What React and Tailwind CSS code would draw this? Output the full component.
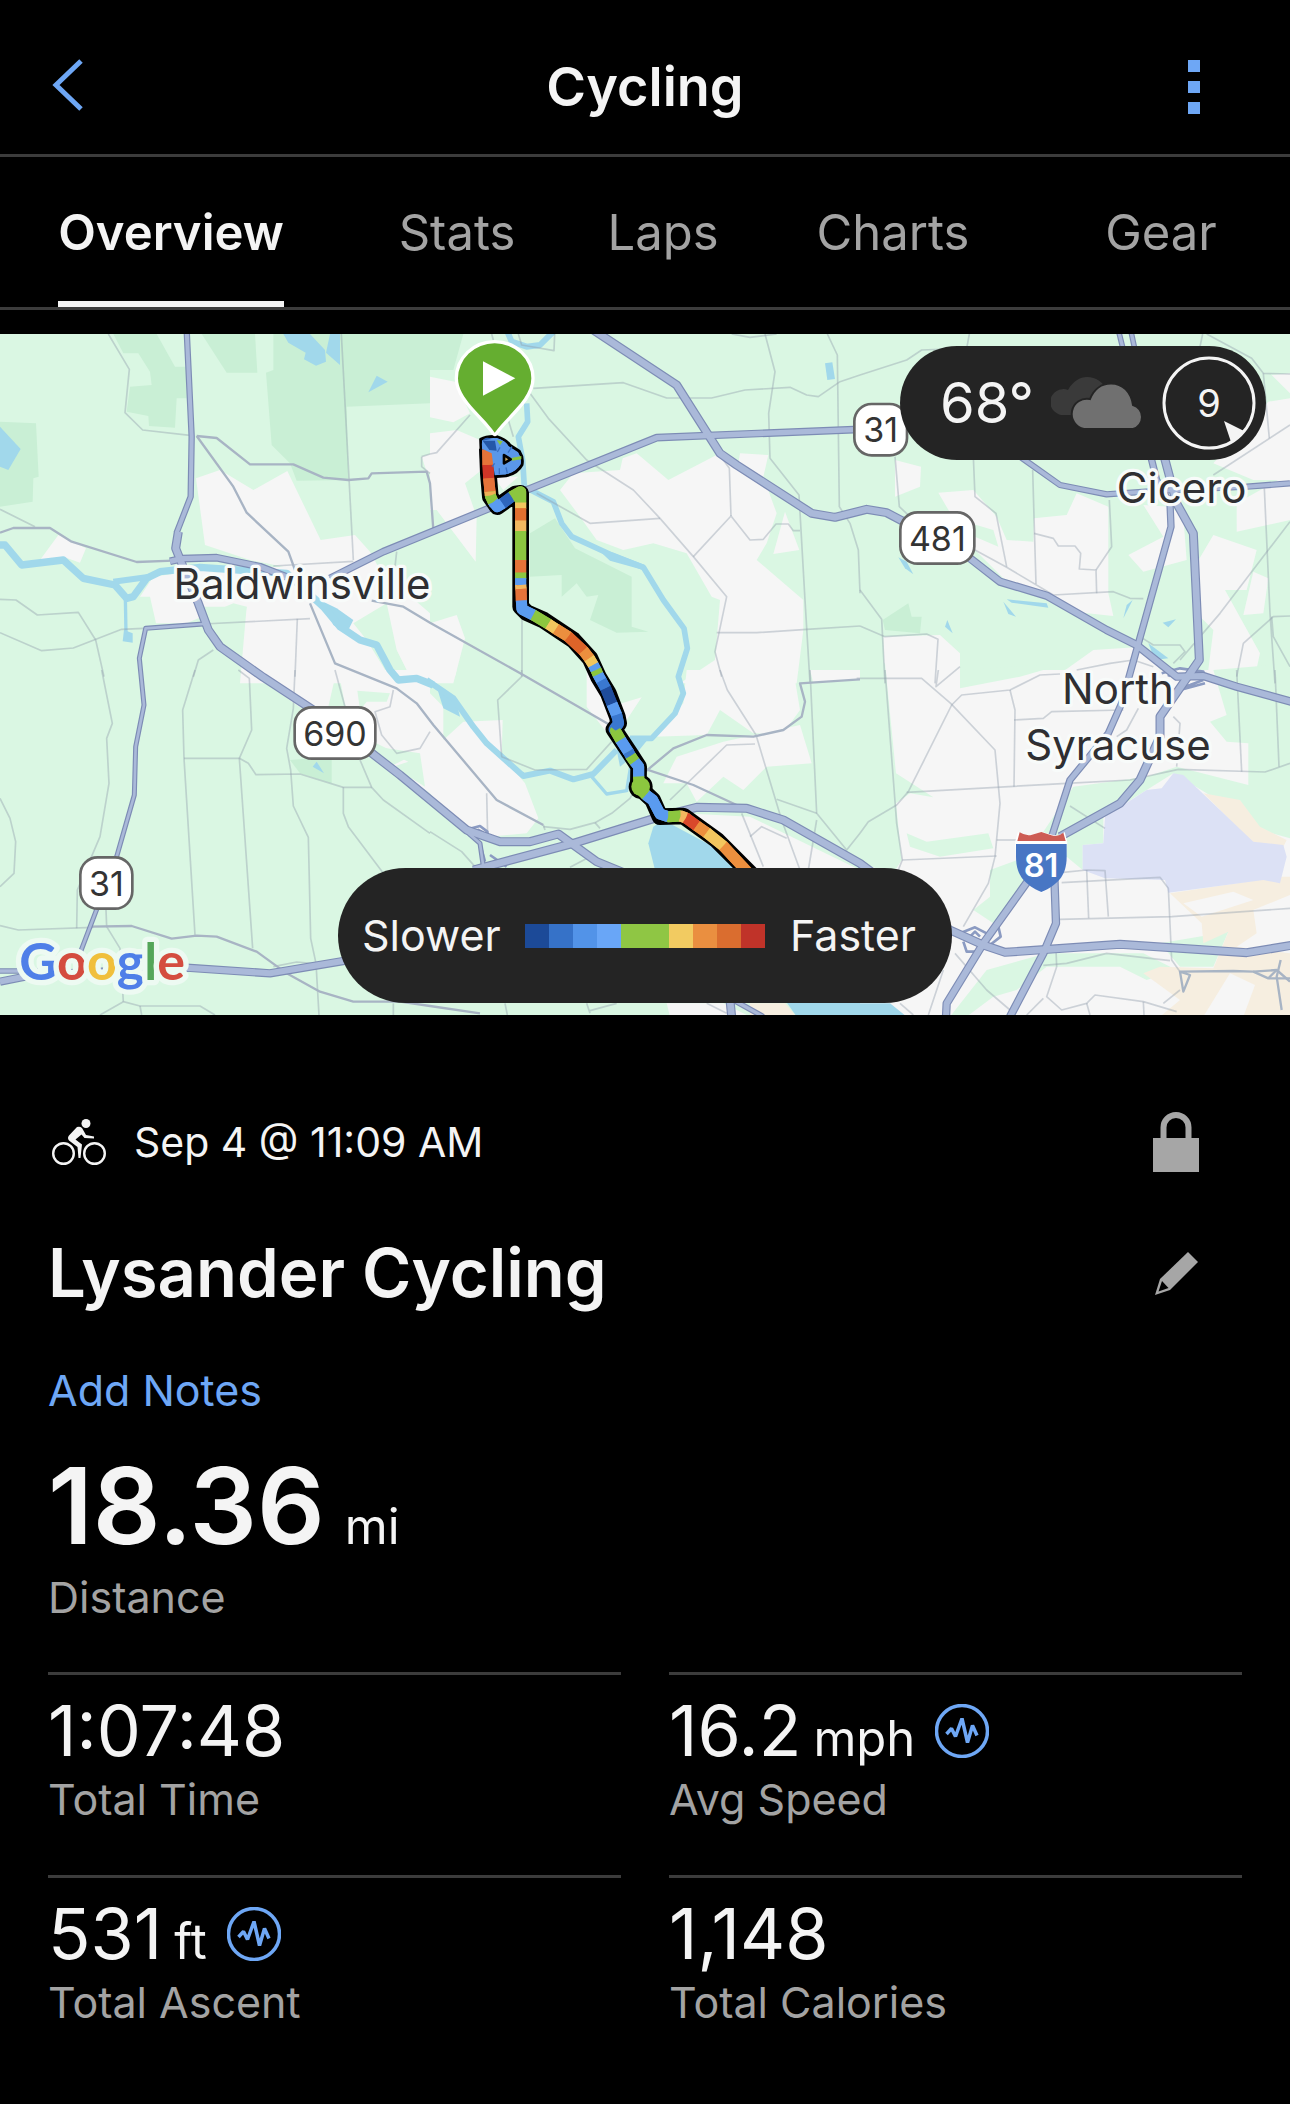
import React from "react";

/* Map geometry: each tile is 1290 units wide; lists are SVG point strings. */
const LAND = {
  green: "#daf7e3",
  wood: "#c9efd5",
  white: "#f6f6f6",
  water: "#a1d8eb",
  airport: "#dce1f5",
  beige: "#f6eee0",
};

const AREAS = [
  {
    at: "translate(0 0)",
    shapes: [
      ["wood", "340,12 470,12 525,110 560,110 560,205 530,205 525,293 447,288 445,258 380,245 390,170 455,165 450,125 415,70 370,70"],
      ["wood", "605,12 765,12 772,128 680,128"],
      ["wood", "820,12 1390,12 1360,120 1290,120 1290,220 1040,230 1045,450 890,452 870,400 815,345 798,128 820,120"],
      ["wood", "0,275 108,280 116,440 100,445 98,515 0,530"],
      ["white", "588,445 660,420 760,480 862,423 962,630 1065,615 1110,665 1140,720 1290,850 1290,1060 720,1060 740,830 700,820 560,880 468,880 450,800 420,800 460,740 600,720 850,710 750,690 615,645"],
      ["green", "1060,880 1160,820 1190,960 1240,1060 1180,1060 1100,930"],
      ["green", "600,830 740,830 720,960 680,960 610,880"],
      ["white", "175,615 258,655 240,698 190,680 120,690"],
      ["white", "1265,380 1300,370 1300,430 1280,425"],
      ["water", "850,12 930,12 975,60 978,95 948,107 912,88 917,68 865,38"],
      ["water", "990,12 1020,12 1020,105 978,68"],
      ["water", "1130,137 1163,155 1105,187"],
      ["water", "0,290 62,357 25,420 0,410"],
      ["water", "372,900 398,910 398,938 368,934"],
      ["water", "970,815 1010,835 1060,870 1040,910 1000,885"],
    ],
  },
  {
    at: "translate(1290 0)",
    shapes: [
      ["white", "0,140 75,155 120,250 70,277 0,262"],
      ["white", "0,310 80,300 150,330 180,400 105,460 140,560 137,695 20,540 0,540"],
      ["white", "190,440 265,440 220,480"],
      ["white", "390,480 430,430 570,420 578,385 620,370 715,450 870,370 925,400 930,370 1015,375 1000,440 1040,550 1010,640 980,690 1120,810 1120,900 1100,1060 750,1060 855,990 870,810 845,800 770,670 670,640 580,660 500,630 450,560"],
      ["white", "1065,545 1108,660 1030,672"],
      ["white", "0,880 80,855 105,925 70,1060 0,1060"],
      ["wood", "300,610 375,565 435,655 605,740 605,890 655,905 560,908 480,870 505,795 470,800 440,760 395,800 395,735 300,740"],
      ["water", "1185,100 1207,97 1215,147 1192,150"],
      ["water", "500,655 540,665 645,705 640,720 540,692"],
    ],
  },
  {
    at: "translate(2580 0)",
    shapes: [
      ["white", "105,390 183,410 180,470 105,500"],
      ["white", "235,488 340,480 410,560 440,630 520,635 522,565 620,555 650,490 745,530 745,790 760,858 640,845 560,790 430,745 345,660 345,620 415,650 400,600 280,565"],
      ["white", "850,525 930,530 970,560 980,690 850,725 805,675 910,620"],
      ["white", "1060,615 1190,660 1160,780 1095,780 1150,880 1200,970 1180,1060 1040,1060 1060,900 1040,880 1020,860 1010,700"],
      ["white", "1130,520 1290,430 1290,570 1130,605"],
      ["white", "1060,400 1225,215 1290,205 1290,450 1180,450"],
      ["white", "1235,135 1290,130 1290,190"],
      ["white", "1180,725 1225,745 1210,850 1150,855"],
      ["white", "70,920 240,915 300,970 300,1060 75,1060"],
      ["white", "700,960 850,950 930,1060 560,1060"],
      ["wood", "68,870 145,820 155,860 185,860 180,910 75,900"],
      ["water", "115,682 140,695 160,733 135,715"],
      ["water", "440,808 560,820 565,833 455,818"],
      ["water", "430,815 468,860 445,852"],
      ["water", "818,810 790,865 800,825"],
      ["water", "908,878 948,868 925,892"],
      ["water", "865,940 925,985 885,990"],
      ["water", "262,870 278,910 255,890"],
    ],
  },
  {
    at: "translate(0 1020)",
    shapes: [
      ["white", "740,0 1010,0 985,110 900,112"],
      ["white", "1015,0 1290,0 1290,370 1235,330 1240,295 1170,290 1250,250 1180,245 1120,215 1035,105"],
      ["green", "1072,62 1170,70 1160,95 1100,95 1080,120"],
      ["green", "1130,230 1260,250 1275,350 1180,290 1225,275"],
      ["wood", "870,270 995,260 995,340 900,310"],
      ["water", "950,275 972,310 938,290"],
    ],
  },
  {
    at: "translate(1290 1020)",
    shapes: [
      ["white", "0,0 80,0 75,20 0,20"],
      ["white", "0,70 40,110 40,210 100,155 218,150 215,255 285,340 325,445 290,490 180,500 80,470 0,370"],
      ["water", "20,50 75,80 90,140 40,115"],
      ["white", "470,0 500,0 540,110 635,82 590,150 540,200 470,110"],
      ["white", "770,0 1105,0 1095,30 1110,120 1060,190 970,190 870,120 830,195 670,200 760,100"],
      ["white", "740,260 880,215 1110,165 1145,280 1010,290 940,360 880,320 800,395 770,340 700,340"],
      ["white", "760,430 960,440 1290,600 950,620 880,500"],
      ["white", "1140,0 1290,0 1290,30 1150,40"],
      ["white", "710,1000 880,1000 960,1040 720,1040"],
      ["beige", "960,1000 1065,1000 1100,1040 960,1040"],
      ["water", "655,520 670,470 700,450 850,530 950,620 680,620"],
      ["water", "1065,990 1400,1000 1420,1040 1100,1040"],
      ["water", "560,240 600,200 660,200 620,250 570,290"],
    ],
  },
  {
    at: "translate(2580 1020)",
    shapes: [
      ["white", "0,0 1290,0 1290,1040 0,1040"],
      ["green", "0,-20 75,-20 108,310 220,382 150,370 108,400 125,570 100,610 0,580"],
      ["green", "300,0 620,-20 480,20 300,55"],
      ["green", "140,490 200,515 385,490 400,535 240,560 150,530"],
      ["green", "390,600 500,560 640,350 860,320 950,290 1165,345 1165,220 1100,215 1050,155 1100,135 1060,0 1290,-20 1290,505 1200,480 1040,370 940,310 860,360 730,440 730,520 668,525 668,600 620,560 500,640 400,760 340,720 390,680"],
      ["green", "380,900 560,850 700,850 850,850 950,900 860,930 780,890 560,890 470,960 400,980 320,1040 270,1040"],
      ["green", "900,820 1105,785 1060,890 960,890"],
      ["beige", "1030,370 1140,390 1200,470 1280,510 1270,530 1180,520"],
      ["beige", "930,670 1260,620 1290,620 1290,675 1180,720 1190,790 1130,830 1290,850 1290,1040 900,1040 960,990 850,910 900,890 1060,895 1105,785 1030,820 1025,760"],
      ["white", "970,700 1120,665 1180,690 1025,740"],
      ["white", "1110,910 1185,945 1150,1040 1030,1040"],
      ["airport", "940,310 970,315 1180,515 1270,525 1280,560 1260,640 1210,630 925,668 915,630 735,625 668,600 668,525 730,520 735,440 860,360 905,355"],
      ["water", "-20,1000 90,1000 140,1040 -20,1040"],
    ],
  },
];

const RIVERS = [
  ["translate(0 0)", 22, "-10,645 15,645 65,705 190,690 250,745 345,765 380,805 400,800 440,745 480,725 600,712 860,730 970,830 1020,890 1080,930 1130,945 1170,1020 1195,1050 1250,1045 1300,1065"],
  ["translate(0 0)", 18, "340,755 450,740"],
  ["translate(0 0)", 10, "376,800 378,910"],
  ["translate(1290 0)", 18, "230,0 245,35 290,50 330,45 370,5"],
  ["translate(1290 0)", 17, "290,220 293,275 265,320 278,390 283,470 370,515 395,580 425,620 545,675 640,712 700,810 762,895 772,955 745,1040 760,1090 735,1150 665,1225 600,1225"],
  ["translate(1290 1020)", 18, "-10,30 70,85 130,170 170,220 280,318 360,302 430,328 490,312 560,240"],
  ["translate(1290 1020)", 10, "485,320 530,372 590,362 605,270"],
];

/* Local streets */
const LOCAL = [
  ["translate(0 0)", [
    "325,12 388,118 375,248 428,300 570,316",
    "1024,12 1060,690", "820,708 1060,694", "0,538 105,590",
    "0,808 48,810 112,855 235,847 287,930 312,1040",
    "0,908 125,962 220,954 365,898 430,895", "610,882 930,866", "892,866 885,1040",
    "580,1040 595,990 640,960", "1190,665 1185,710",
  ]],
  ["translate(1290 0)", [
    "-25,380 0,372 20,368 120,255", "-25,380 -25,410 0,430", "235,270 250,320",
    "265,12 275,45 372,62 374,12", "185,12 190,30",
    "310,175 580,158 710,204 845,204 945,180 1080,172 1130,195 1165,200 1230,155 1290,135",
    "300,190 355,265 470,390 610,480 690,565 790,680 890,800 855,965 875,1040",
    "320,490 480,580 690,565", "790,680 903,558 960,630 1000,628 1038,582 1075,582 1090,602 1110,602",
    "903,558 898,415 830,320", "1005,12 1035,125 1016,250 1020,385 1107,495 1125,810 1140,1060",
    "1192,12 1222,75 1228,530 1260,580 1285,660 1290,790", "860,908 980,908 1130,898 1290,888",
    "276,850 276,1040", "905,12 960,22 1040,12",
  ]],
  ["translate(2580 0)", [
    "0,135 140,90 185,60 320,55 328,12", "105,380 118,530 150,560", "340,380 345,500 408,550 440,710",
    "518,420 522,560 528,762", "522,610 580,625 595,648 645,648 662,670 658,717 708,720 710,790",
    "708,720 755,650 748,510", "345,660 440,712 580,795 760,785 810,805 850,806",
    "0,780 65,868 75,1060", "0,888 75,920 200,912 234,928 225,1060",
    "1040,12 1175,85 1210,130 1290,132", "1020,50 1028,12", "1210,130 1228,325", "1060,435 1290,285",
    "1213,475 1230,850 1245,1060", "960,990 1080,850 1290,575", "1290,858 1240,860 1150,940 1130,1040",
    "1235,860 1240,920 1290,1010", "840,920 880,945 960,945 975,965 940,1000", "650,1020 750,1000 820,990 880,1010",
  ]],
  ["translate(0 1020)", [
    "305,0 337,160 320,205 327,340 300,500 232,660 230,775", "0,385 30,445 47,515 42,610 0,650",
    "585,0 548,120 552,265 585,795", "715,0 748,25 755,180 718,265 758,835",
    "552,265 718,265 745,280 768,314 900,312 1030,352 1115,352", "885,0 880,115 860,235 872,300 880,408 925,502 932,805 948,880 957,1035",
    "1005,0 1035,110", "1080,270 1115,352 1150,390 1290,490", "1030,352 1030,430 1045,470 1150,610",
    "0,767 55,780 280,772", "318,720 320,770 360,835 370,995", "300,1035 370,995 420,1008 600,1008 645,1035",
    "420,1008 425,1035", "820,890 890,876 960,882", "1180,1000 1180,1035", "1180,60 1170,110 1125,125 1145,195 1190,250 1260,235 1290,185",
  ]],
  ["translate(1290 1020)", [
    "275,0 275,20 203,90 215,260 315,300 470,298 545,215", "170,370 173,500", "0,485 95,545 135,590",
    "340,465 345,480", "340,470 420,478 495,458 545,430 600,385 620,350", "495,458 510,475", "480,560 420,592",
    "870,0 892,60 978,195 990,235 1055,450 1110,600", "1140,0 1160,430 1250,540 1290,490",
    "720,390 890,225 975,222", "1040,388 1160,430", "935,430 1000,590", "960,500 995,470 1070,505", "1160,450 1135,600",
    "225,1000 232,1035", "470,1000 480,1030", "480,1022 560,1000", "830,1000 890,1030",
  ]],
  ["translate(2580 1020)", [
    "-10,25 185,25 272,100 405,240 420,400 405,560 385,640 310,770",
    "300,-10 228,50 235,0", "275,105 145,365", "275,105 305,75 450,60 540,15 600,12",
    "450,60 465,120 462,350", "462,150 550,145 575,125 790,120", "75,0 110,460 127,570 95,650", "127,570 410,558",
    "140,367 620,340 810,330 955,298 1215,306 1290,280", "0,490 25,455 110,405 145,365",
    "1130,0 1145,305", "1245,0 1257,290", "630,408 735,475", "410,510 480,510",
    "610,607 680,600 735,602 745,740", "680,600 686,745", "605,638 900,622 925,655 935,870 960,905",
    "600,748 935,740 1290,715", "588,840 590,890 560,980 605,1020 680,1000 705,975 850,995 950,1025",
    "550,886 620,880 740,850 930,872", "285,850 380,960 450,1020", "250,900 205,1035", "910,1000 960,960",
    "550,985 500,1035", "680,1000 690,1035", "850,995 852,1035", "835,115 800,180 770,200", "120,1000 160,1035",
    "940,140 960,160 950,290",
  ]],
];

/* Secondary roads */
const MINOR = [
  ["translate(0 0)", [
    "0,608 40,594 150,594 215,635 410,696 520,692",
    "590,318 650,324 750,403 880,403 970,443 1045,450 1105,445 1115,430 1280,425 1290,460 1300,600",
    "590,318 700,470 740,548 865,665 885,720", "930,820 1005,1000 1190,1075 1250,1120 1300,1185 1490,1410 1630,1485",
    "1115,812 1210,830 1290,878 1570,1035 1830,1185",
  ]],
  ["translate(0 1020)", ["270,770 395,768 515,806 590,797 650,800 770,845 860,910 960,965 1060,995 1200,995 1290,1008 1440,1030"]],
  ["translate(1290 1020)", [
    "640,295 790,345 920,405", "640,310 730,235 830,195 970,200 1060,180 1115,140 1125,95 1110,40 1290,28",
  ]],
  ["translate(2580 1020)", [
    "960,905 990,915 970,965 960,905 1120,903 1180,905 1225,925 1290,925", "1180,905 1250,900 1290,935",
    "1262,870 1250,920 1265,1020", "1225,925 1250,900",
  ]],
];

/* Highways: transform, width, points */
const MAJOR = [
  ["translate(0 0)", 12, "560,0 575,320 572,500 530,608"],
  ["translate(0 0)", 20, "535,605 527,655 545,700 595,820 625,900 660,950 790,1042 1000,1180 1200,1335 1400,1500 1500,1535 1590,1535 1675,1512 1790,1595 1900,1640"],
  ["translate(0 0)", 16, "510,694 545,686 650,683 780,710 870,745"],
  ["translate(0 0)", 8, "610,882 437,895 418,985 432,1125 407,1250 403,1395 350,1580 240,1870"],
  ["translate(0 0)", 16, "990,745 1150,665 1480,530"],
  ["translate(1290 0)", 16, "290,480 680,323 1290,298"],
  ["translate(1290 0)", 20, "490,0 740,165 870,370 920,405 1145,550 1215,562 1310,538 1370,548 1440,585"],
  ["translate(2580 0)", 18, "330,685 420,755 560,797 740,900 830,945 950,1040 1030,1038 1130,1070 1300,1117"],
  ["translate(2580 0)", 12, "480,380 600,465 740,493 900,482 1160,470 1290,460"],
  ["translate(2580 0)", 10, "775,0 790,60"],
  ["translate(2580 0)", 10, "812,0 825,60"],
  ["translate(2580 0)", 15, "870,370 890,450 930,520 933,590 785,1120 745,1210 630,1350 575,1520"],
  ["translate(2580 0)", 20, "910,370 950,520 1000,610 1018,990 900,1160 900,1220 840,1350 780,1420 600,1520"],
  ["translate(0 1020)", 10, "0,903 120,903"],
  ["translate(0 1020)", 18, "0,935 100,915 560,893 810,910 1060,868"],
  ["translate(1290 1020)", 20, "130,600 430,520 690,440 800,412 950,415 1060,450 1290,580 1560,780 1660,825 1725,847 2070,823 2450,848 2590,825"],
  ["translate(1290 1020)", 8, "110,485 150,520 160,590"],
  ["translate(1290 1020)", 20, "900,990 905,1040"],
  ["translate(1290 1020)", 10, "910,990 1000,1040"],
  ["translate(2580 1020)", 18, "520,610 370,820 260,1000 258,1040"],
  ["translate(2580 1020)", 18, "583,620 588,760 550,850 450,1040"],
];

const RAMPS = [
  ["translate(1290 1020)", "120,500 125,475 150,468 172,485 175,510 M135,500 145,480 160,488 M150,520 165,575 M180,555 230,590"],
  ["translate(2580 1020)", "300,790 345,772 380,790 M310,815 320,845 350,845 M415,770 422,800 390,825 M330,800 345,785 360,800"],
  ["translate(2580 1020)", "905,10 960,-5 1030,5 1035,20 M1030,30 990,45 940,60 M925,20 940,-5 M1010,-10 980,15 M960,60 1035,40"],
];

const ROUTE = "172,355 175,430 181,500 202,530 256,492 272,490 272,830 290,848 340,870 430,930 480,985 505,1040 535,1090 562,1160 566,1180 552,1198 600,1270 626,1310 625,1370 668,1410 690,1460 760,1458 860,1530 970,1640";

/* Route colouring by pace */
const PACE = [
  ["#2457a8", "172,340 173,358"], ["#e57339", "173,358 174,405"], ["#cf3527", "174,405 176,445"],
  ["#e57339", "176,445 180,485"], ["#f0b055", "180,485 181,497"], ["#8cc63f", "181,497 190,517"],
  ["#5a9bf0", "190,517 202,530 218,520"], ["#2e66bd", "218,520 245,500"], ["#8cc63f", "245,500 272,485 272,518"],
  ["#f2c65e", "272,518 272,535"], ["#e0702f", "272,535 272,572"], ["#f2b860", "272,572 272,603"],
  ["#8cc63f", "272,603 272,690"], ["#e57339", "272,690 272,728"], ["#8cc63f", "272,728 272,745"],
  ["#5a9bf0", "272,745 272,765"], ["#f2b860", "272,765 273,777"], ["#e57339", "273,777 274,812"],
  ["#5a9bf0", "274,812 276,838 310,855"], ["#8cc63f", "310,855 355,882"], ["#f2c65e", "355,882 378,897"],
  ["#ec8f3e", "378,897 415,920"], ["#de6429", "415,920 460,962"], ["#ec8f3e", "460,962 478,985"],
  ["#f2c65e", "478,985 490,1005"], ["#5a9bf0", "490,1005 498,1020"], ["#8cc63f", "498,1020 504,1034"], ["#5a9bf0", "504,1034 514,1052"],
  ["#3a78d0", "514,1052 527,1075"], ["#1f4c9c", "527,1075 546,1122"], ["#5a9bf0", "546,1122 560,1155"],
  ["#3a78d0", "560,1155 566,1180 552,1198"], ["#8cc63f", "556,1202 572,1230"], ["#5a9bf0", "572,1230 595,1265"],
  ["#3a78d0", "595,1265 602,1278"], ["#8cc63f", "602,1278 614,1295"], ["#5a9bf0", "614,1295 626,1310 626,1340"],
  ["#8cc63f", "626,1340 628,1375 648,1395"], ["#5a9bf0", "648,1395 668,1410 690,1452 715,1460"],
  ["#8cc63f", "715,1460 752,1458"], ["#f2b860", "752,1458 768,1464"], ["#d9482b", "768,1464 800,1487"],
  ["#ec8f3e", "800,1487 830,1508"], ["#f2c65e", "830,1508 880,1548"], ["#ec8f3e", "880,1548 970,1645"],
];

function RoadShield({ x, y, width, label }) {
  return (
    <g>
      <rect x={x} y={y} width={width} height="154" rx="52" fill="#fff" stroke="#666" strokeWidth="8" />
      <text x={x + width / 2} y={y + 115} textAnchor="middle" fontSize="102" fill="#333">{label}</text>
    </g>
  );
}

function RouteMap() {
  return (
    <svg
      viewBox="0 12 3870 2043"
      preserveAspectRatio="xMidYMid slice"
      className="block h-full w-full font-['Inter',sans-serif]"
      role="img"
      aria-label="Route map"
    >
      <rect y="0" width="3870" height="2060" fill={LAND.green} />
      {AREAS.map((tile) => (
        <g key={tile.at} transform={tile.at}>
          {tile.shapes.map(([kind, points]) => (
            <polygon key={points} points={points} fill={LAND[kind]} />
          ))}
        </g>
      ))}
      <g fill="none" strokeLinejoin="round">
        {RIVERS.map(([at, width, points]) => (
          <polyline key={points} transform={at} points={points} stroke={LAND.water} strokeWidth={width} />
        ))}
        <g stroke="#8f9bab" strokeOpacity="0.4" strokeWidth="5">
          {LOCAL.map(([at, lines]) => (
            <g key={at} transform={at}>
              {lines.map((points) => <polyline key={points} points={points} />)}
            </g>
          ))}
        </g>
        <g stroke="#a8b4c4" strokeWidth="7">
          {MINOR.map(([at, lines]) => (
            <g key={at} transform={at}>
              {lines.map((points) => <polyline key={points} points={points} />)}
            </g>
          ))}
        </g>
        {RAMPS.map(([at, d]) => (
          <path key={d} transform={at} d={"M" + d} stroke="#8b9bc2" strokeWidth="8" />
        ))}
        {MAJOR.map(([at, width, points]) => (
          <polyline key={points} transform={at} points={points} stroke="#7d8cb5" strokeWidth={width + 7} />
        ))}
        {MAJOR.map(([at, width, points]) => (
          <polyline key={points} transform={at} points={points} stroke="#aab9d9" strokeWidth={width} />
        ))}
      </g>

      <g transform="translate(1290 0)" fill="none" strokeLinejoin="round">
        <path d="M152 328Q170 318 200 320Q228 328 240 346L268 364Q280 382 276 404Q262 430 228 437L190 440L155 400Z" fill="#5a97ea" stroke="#000" strokeWidth="9" />
        <polyline points={ROUTE} stroke="#000" strokeWidth="50" />
        <circle cx="632" cy="1370" r="36" fill="#000" />
        {PACE.map(([color, points]) => (
          <polyline key={points} points={points} stroke={color} strokeWidth="33" strokeLinecap="round" />
        ))}
        {PACE.map(([color, points]) => (
          <polyline key={points} points={points} stroke={color} strokeWidth="33" />
        ))}
        <circle cx="632" cy="1370" r="28" fill="#8cc63f" />
        <path d="M156 332L200 324Q228 332 236 350L264 368Q276 386 272 402Q258 426 226 433L194 436L185 370L156 356Z" fill="#5a97ea" />
        <path d="M158 332L195 332L200 362L178 360Z" fill="#2457a8" />
        <path d="M200 330L218 334L210 346Z M244 384L274 378L274 388L246 392Z" fill="#8cc63f" />
        <path d="M208 415v18M228 412l4 18M194 400l-8 10M246 350l-12 18M210 352l-8 14" stroke="#3a70c4" strokeWidth="4" />
        <path d="M222 375L242 388L222 400Z" fill="#c9a45a" stroke="#000" strokeWidth="8" />
        <path d="M194 308C155 252 84 205 84 145A110 105 0 0 1 304 145C304 205 236 252 194 308Z" fill="#65ae30" stroke="#fff" strokeWidth="20" className="[paint-order:stroke]" />
        <path d="M159 94L256 145L159 197Z" fill="#fff" />
      </g>

      <RoadShield x={2563} y={222} width={158} label="31" />
      <RoadShield x={2701} y={547} width={222} label="481" />
      <RoadShield x={884} y={1132} width={242} label="690" />
      <RoadShield x={241} y={1582} width={156} label="31" />

      <g transform="translate(2580 1020)">
        <path d="M465 516L474 486Q495 500 512 494Q532 490 545 485Q558 490 576 494Q598 500 614 486L622 516L618 570Q600 640 545 668Q486 640 468 570Z" fill="#fff" />
        <path d="M472 513L479 487Q500 500 516 494L544 486L574 496Q594 502 610 488L617 513Z" fill="#cd5c54" />
        <path d="M468 522H620V560C620 620 590 645 544 666C498 645 468 620 468 560Z" fill="#4876c4" />
        <text x="543" y="622" textAnchor="middle" fontSize="98" fontWeight="600" fill="#fff">81</text>
      </g>

      <g fontSize="126" fill="#2f2f32" stroke="#f8fbfa" strokeWidth="20" strokeLinejoin="round" textAnchor="middle" className="[paint-order:stroke]">
        <text x="906" y="808">Baldwinsville</text>
        <text x="3545" y="520">Cicero</text>
        <text x="3354" y="1123">North</text>
        <text x="3354" y="1290">Syracuse</text>
      </g>
      <text x="58" y="1950" fontSize="156" fontWeight="700" stroke="#edfaf2" strokeWidth="32" strokeLinejoin="round" className="font-['Lato',sans-serif] [paint-order:stroke]">
        <tspan fill="#4f7fe8">G</tspan><tspan fill="#d44c3f">o</tspan><tspan fill="#f0bf3c">o</tspan><tspan fill="#4f7fe8">g</tspan><tspan fill="#55a65a">l</tspan><tspan fill="#d44c3f">e</tspan>
      </text>
    </svg>
  );
}

function CloudIcon() {
  return (
    <svg viewBox="0 0 94 53" className="h-[53px] w-[94px]" aria-label="Cloudy">
      <path d="M14 38A13 13 0 1 1 17 13C22 4 29 0 36 0C45 0 52 5 55 12L40 38Z" fill="#3a3a3a" />
      <path d="M33 52A15 15 0 1 1 39 22C43 12 51 6.500 60 6.500C72 6.500 80 15 82 28A12.500 12.500 0 0 1 82 52Z" fill="#707070" stroke="#242424" strokeWidth="2" />
    </svg>
  );
}

function WeatherPill() {
  return (
    <div className="absolute top-3 right-6 flex h-[114px] w-[366px] items-center justify-between rounded-full bg-[#242424] pr-[10px] pl-10">
      <span className="text-[56px] leading-none">68°</span>
      <CloudIcon />
      <div className="relative flex size-[94px] items-center justify-center text-[38px] leading-none">
        <svg viewBox="0 0 94 94" className="absolute inset-0" aria-hidden="true">
          <circle cx="47" cy="47" r="45" fill="none" stroke="#f4f4f4" strokeWidth="3" />
          <path d="M62 65L83 75.500Q77 82 69 86Z" fill="#f4f4f4" />
        </svg>
        9
      </div>
    </div>
  );
}

function PaceLegend() {
  return (
    <div className="absolute bottom-3 left-1/2 flex h-[135px] w-[614px] -translate-x-1/2 items-center justify-between rounded-full bg-[#242424] pr-9 pl-6 text-[43px]">
      <span>Slower</span>
      <div className="flex h-6 w-60">
        <i className="flex-1 bg-[#1c4a98]" />
        <i className="flex-1 bg-[#3672c8]" />
        <i className="flex-1 bg-[#5293e8]" />
        <i className="flex-1 bg-[#69a6f7]" />
        <i className="flex-1 bg-[#8fc644]" />
        <i className="flex-1 bg-[#8fc644]" />
        <i className="flex-1 bg-[#f2cb61]" />
        <i className="flex-1 bg-[#ea8f40]" />
        <i className="flex-1 bg-[#da6d2f]" />
        <i className="flex-1 bg-[#c03329]" />
      </div>
      <span>Faster</span>
    </div>
  );
}

function BikeIcon() {
  return (
    <svg viewBox="0 0 54 46" className="h-[46px] w-[54px]" fill="none" stroke="#f4f4f4" aria-hidden="true">
      <circle cx="11.500" cy="34.500" r="10.300" strokeWidth="2.400" />
      <circle cx="42.500" cy="34.500" r="10.300" strokeWidth="2.400" />
      <circle cx="34" cy="4.500" r="4.500" fill="#f4f4f4" stroke="none" />
      <path d="M25 8Q28 7 30 9L34 16L42 17.500V19.500L32.500 19L29.500 15.500L23.500 20.500L30 25.500L28.500 39H26.500L25.500 28L17 21.500Q15 19 17 16.500Z" fill="#f4f4f4" stroke="none" />
    </svg>
  );
}

function ChartBadge({ label }) {
  return (
    <button type="button" aria-label={label} className="ml-5 self-center">
      <svg viewBox="0 0 54 54" className="size-[54px]" fill="none" stroke="#6ea7f5">
        <circle cx="27" cy="27" r="25.500" strokeWidth="3.500" />
        <path d="M11.500 30L16.500 24.500L20.500 32.500L27 14.500L32.500 38.500L37.500 21.500L42 31.500" strokeWidth="3.500" strokeLinejoin="bevel" />
      </svg>
    </button>
  );
}

function Stat({ value, unit, label, chart }) {
  return (
    <div className="border-t-[3px] border-[#3c3c3c] pt-4 pb-[47px]">
      <dd className="flex h-20 items-baseline text-[70px] leading-[80px]">
        {value}
        {unit && <span className="ml-3 text-[49px]">{unit}</span>}
        {chart && <ChartBadge label={`${label} chart`} />}
      </dd>
      <dt className="text-[43px] leading-[57px] text-[#a3a3a3]">{label}</dt>
    </div>
  );
}

const TABS = ["Overview", "Stats", "Laps", "Charts", "Gear"];

export default function App() {
  return (
    <div className="min-h-screen bg-black font-['Inter',sans-serif] text-[#f4f4f4]">
      <header className="grid h-[157px] grid-cols-[1fr_auto_1fr] items-center border-b-[3px] border-[#3c3c3c] px-12 pt-5">
        <button type="button" aria-label="Back" className="mb-1 w-10 justify-self-start">
          <svg viewBox="0 0 40 52" className="h-[52px] w-10" fill="none" stroke="#6ea7f5" strokeWidth="5">
            <path d="M33 2L8 26L33 50" />
          </svg>
        </button>
        <h1 className="text-[54px] leading-none font-semibold">Cycling</h1>
        <button type="button" aria-label="More options" className="mr-[42px] flex flex-col gap-[9px] justify-self-end">
          <i className="size-3 bg-[#6ea7f5]" />
          <i className="size-3 bg-[#6ea7f5]" />
          <i className="size-3 bg-[#6ea7f5]" />
        </button>
      </header>

      <nav className="grid h-[153px] grid-cols-[342fr_230fr_182fr_278fr_258fr] justify-items-center border-b-[3px] border-[#3c3c3c]">
        {TABS.map((tab, i) => (
          <a
            key={tab}
            href={`#${tab.toLowerCase()}`}
            aria-current={i === 0 ? "page" : undefined}
            className={
              i === 0
                ? "flex items-center border-b-[6px] border-[#f4f4f4] pt-2 text-[49px] font-semibold"
                : "flex items-center pt-[2px] text-[49px] text-[#a3a3a3]"
            }
          >
            {tab}
          </a>
        ))}
      </nav>

      <section className="relative mt-6 h-[681px] overflow-hidden">
        <RouteMap />
        <WeatherPill />
        <PaceLegend />
      </section>

      <main className="px-12 pt-[99px]">
        <div className="flex h-14 items-center">
          <div className="flex flex-1 items-center gap-7 pl-1">
            <BikeIcon />
            <time className="text-[41px] leading-[56px]">Sep 4 @ 11:09 AM</time>
          </div>
          <button type="button" aria-label="Privacy" className="flex w-[132px] justify-center">
            <svg viewBox="0 0 46 60" className="h-[60px] w-[46px]">
              <path d="M10.500 28V15.500A12.500 12.500 0 0 1 35.500 15.500V28" fill="none" stroke="#a6a6a6" strokeWidth="6" />
              <rect y="26" width="46" height="34" fill="#a6a6a6" />
            </svg>
          </button>
        </div>

        <div className="mt-[63px] flex h-20 items-center">
          <h2 className="flex-1 text-[67px] leading-[80px] font-semibold">Lysander Cycling</h2>
          <button type="button" aria-label="Edit name" className="flex w-[132px] justify-center">
            <svg viewBox="0 0 43 43" className="size-[43px]">
              <path d="M33 0L43 10L15 38L0 43L5 27Z" fill="#a6a6a6" />
              <path d="M7 29L13.500 36L3.500 39.500Z" fill="#000" />
            </svg>
          </button>
        </div>

        <a href="#notes" className="mt-[49px] block text-[43px] leading-[56px] text-[#6ea7f5]">Add Notes</a>

        <dl>
          <div className="mt-7">
            <dd className="flex h-[120px] items-baseline text-[106px] leading-[120px] font-semibold">
              18.36<span className="ml-5 text-[49px] font-normal">mi</span>
            </dd>
            <dt className="mt-[3px] text-[43px] leading-[56px] text-[#a3a3a3]">Distance</dt>
          </div>
          <div className="mt-[47px] grid grid-cols-2 gap-x-12">
            <Stat value="1:07:48" label="Total Time" />
            <Stat value="16.2" unit="mph" label="Avg Speed" chart />
            <Stat value="531" unit="ft" label="Total Ascent" chart />
            <Stat value="1,148" label="Total Calories" />
          </div>
        </dl>
      </main>
    </div>
  );
}
